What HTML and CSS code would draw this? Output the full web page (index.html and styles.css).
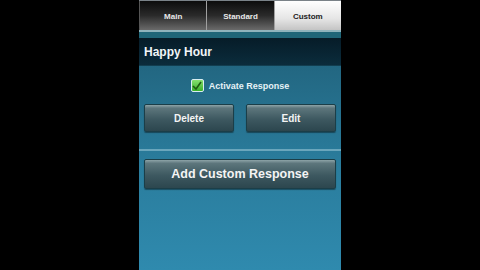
FILE: index.html
```html
<!DOCTYPE html>
<html lang="en">
<head>
    <meta charset="UTF-8">
    <meta name="viewport" content="width=device-width, initial-scale=1.0">
    <title>Custom Responses</title>
    <link rel="stylesheet" href="styles.css">
</head>
<body>
    <div class="screen">
        <div class="tabs">
            <div class="tab">Main</div>
            <div class="tab">Standard</div>
            <div class="tab active">Custom</div>
        </div>
        <div class="tab-line"></div>

        <div class="header">Happy Hour</div>

        <div class="content">
            <label class="check-row">
                <span class="checkbox">
                    <svg width="10" height="9" viewBox="0 0 10 9">
                        <path d="M1 5 L4 8 L9 1" fill="none" stroke="#1d5a10" stroke-width="1.6"/>
                    </svg>
                </span>
                Activate Response
            </label>

            <div class="btn-row">
                <button class="btn">Delete</button>
                <button class="btn">Edit</button>
            </div>

            <div class="divider"></div>

            <button class="btn btn-wide">Add Custom Response</button>
        </div>
    </div>
</body>
</html>
```

FILE: styles.css
```css
body {
    margin: 0;
    background: #000;
    font-family: "Liberation Sans", Arial, sans-serif;
    font-weight: bold;
    display: flex;
    justify-content: center;
}
.screen {
    width: 202px;
    height: 270px;
    display: flex;
    flex-direction: column;
    background: linear-gradient(#1d586f, #2a7c9c 60%, #2f8aae);
}
.tabs {
    display: flex;
    height: 29px;
    border-top: 1px solid #7a8288;
}
.tab {
    flex: 1;
    display: flex;
    align-items: center;
    justify-content: center;
    padding-top: 2px;
    font-size: 8px;
    color: #e8e8e8;
    background: linear-gradient(#0c0c0c, #2a2a2a 50%, #6a6a6a);
    border-left: 1px solid #a0a0a0;
}
.tab:first-child {
    border-left: 1px solid #555;
}
.tab.active {
    color: #222;
    background: linear-gradient(#ffffff, #e6e6e6 60%, #c4c4c4);
}
.tab-line {
    height: 6px;
    border-top: 2px solid #8fb4bc;
    background: #1f6678;
}
.header {
    height: 27px;
    padding-left: 5px;
    display: flex;
    align-items: center;
    font-size: 12px;
    color: #f2f6f8;
    background: linear-gradient(#061c28, #0b2c3c);
    border-bottom: 1px solid #123e50;
}
.content {
    display: flex;
    flex-direction: column;
    padding: 13px 5px 0 5px;
}
.check-row {
    display: flex;
    align-items: center;
    justify-content: center;
    gap: 5px;
    font-size: 9px;
    color: #e6f2f6;
}
.checkbox {
    width: 11px;
    height: 11px;
    display: flex;
    align-items: center;
    justify-content: center;
    border: 1px solid #d8eef0;
    border-radius: 2px;
    background: linear-gradient(#86e070, #38b02a);
}
.btn-row {
    display: flex;
    gap: 12px;
    margin-top: 12px;
}
.btn {
    flex: 1;
    height: 28px;
    font-family: inherit;
    font-weight: bold;
    font-size: 10px;
    color: #f4f4f4;
    border: 1px solid #1b3e48;
    border-radius: 2px;
    background: linear-gradient(#8ea4a8, #5d767c 12%, #3d5860 55%, #2c464e);
    box-shadow: 0 1px 1px rgba(0, 0, 0, 0.4);
}
.divider {
    height: 2px;
    margin: 17px -5px 8px -5px;
    background: #6aa6bc;
}
.btn-wide {
    flex: none;
    height: 30px;
    font-size: 12.5px;
}
```
